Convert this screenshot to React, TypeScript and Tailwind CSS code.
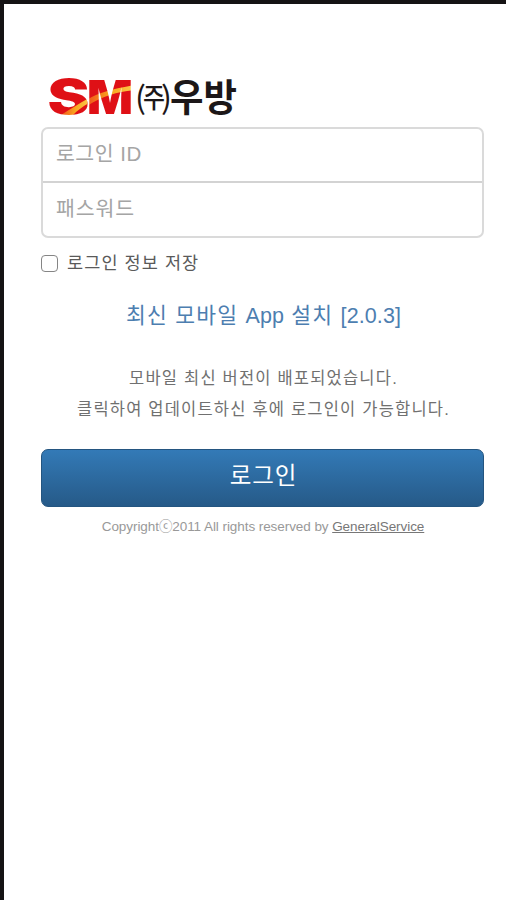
const family = "font-['Liberation_Sans','Noto_Sans_CJK_KR',sans-serif]";

function Logo() {
  return (
    <svg width="210" height="60" viewBox="0 0 210 60" className="block overflow-visible" role="img" aria-label="SM (주)우방">
      <defs>
        <linearGradient id="flare" x1="0" y1="0" x2="1" y2="0">
          <stop offset="0" stopColor="#f0521a" />
          <stop offset="0.5" stopColor="#f9a51f" />
          <stop offset="1" stopColor="#fbc94a" />
        </linearGradient>
        <clipPath id="letters">
          <text x="6.5" y="47.5" fontSize="48.5" fontWeight="900" fontFamily="Inter, sans-serif" textLength="42" lengthAdjust="spacingAndGlyphs">S</text>
          <text x="46" y="48" fontSize="47" fontWeight="900" fontFamily="Inter, sans-serif" textLength="46" lengthAdjust="spacingAndGlyphs">M</text>
        </clipPath>
      </defs>
      <g clipPath="url(#letters)">
        <rect width="95" height="60" fill="#df1016" />
        <path d="M20 49 C28 44 37 38 48 32 L48 37 C42 40 37 44 31 50Z" fill="url(#flare)" />
        <path d="M46 34 C57 26 73 23 93 19 L93 24 C77 26 62 29 46 40Z" fill="url(#flare)" />
      </g>
      <g fill="#1c1718" fontFamily="'Noto Sans CJK KR', sans-serif">
        <text x="94" y="43" fontSize="31" fontWeight="400" textLength="11" lengthAdjust="spacingAndGlyphs">(</text>
        <text x="102" y="41.5" fontSize="27" fontWeight="500" textLength="22" lengthAdjust="spacingAndGlyphs">주</text>
        <text x="120" y="43" fontSize="31" fontWeight="400" textLength="11" lengthAdjust="spacingAndGlyphs">)</text>
        <text x="129" y="45" fontSize="37.5" fontWeight="700" textLength="67" lengthAdjust="spacingAndGlyphs">우방</text>
      </g>
    </svg>
  );
}

export default function App() {
  return (
    <main className={`h-[900px] w-[506px] overflow-hidden border-l-4 border-t-4 border-[#151314] bg-white pl-[37px] pr-[22px] pt-[62px] ${family}`}>
      <Logo />
      <form className="mt-px">
        <div className="h-[111px] rounded-[7px] border-2 border-[#dadada]">
          <input aria-label="로그인 ID" placeholder="로그인 ID" className="block h-[54px] w-full border-b-2 border-[#d3d3d3] bg-transparent px-[13px] pb-[2px] text-[20.5px] tracking-[0.5px] outline-none placeholder:text-[#a5a5a5]" />
          <input aria-label="패스워드" type="text" placeholder="패스워드" className="block h-[53px] w-full bg-transparent px-[13px] pb-[2px] text-[20.5px] tracking-[0.9px] outline-none placeholder:text-[#a5a5a5]" />
        </div>
        <label className="mt-[13px] flex h-6 items-center whitespace-nowrap text-[17.5px] tracking-[1.1px] text-[#5a5a5a]">
          <input type="checkbox" className="mr-[9px] mt-px size-[17px] appearance-none rounded-[4px] border-[1.5px] border-[#858585] bg-white" />
          <span>로그인 정보 저장</span>
        </label>
        <a className="mt-[25px] block h-8 whitespace-nowrap pl-0.5 text-center text-[21.5px] leading-8 tracking-[1.25px] text-[#4d7eb0]">
          최신 모바일 <span className="tracking-[0.1px]">App</span> 설치 <span className="tracking-[0.1px]">[2.0.3]</span>
        </a>
        <p className="mt-[31px] whitespace-nowrap pl-[2px] text-center text-[16.5px] leading-[31px] tracking-[1.2px] text-[#707070]">
          모바일 최신 버전이 배포되었습니다.
          <br />
          클릭하여 업데이트하신 후에 로그인이 가능합니다.
        </p>
        <button type="button" className="mt-[24px] block h-[58px] w-full rounded-[7px] border border-[#245580] bg-linear-to-b from-[#337ab7] to-[#265a88] pb-[2px] pl-[2px] text-[23.5px] tracking-[0.9px] text-white">로그인</button>
      </form>
      <footer className="mt-[10px] whitespace-nowrap pl-px text-center text-[13.5px] leading-5 tracking-[-0.07px] text-[#999]">
        Copyrightⓒ2011 All rights reserved by <a className="text-[#777] underline">GeneralService</a>
      </footer>
    </main>
  );
}
